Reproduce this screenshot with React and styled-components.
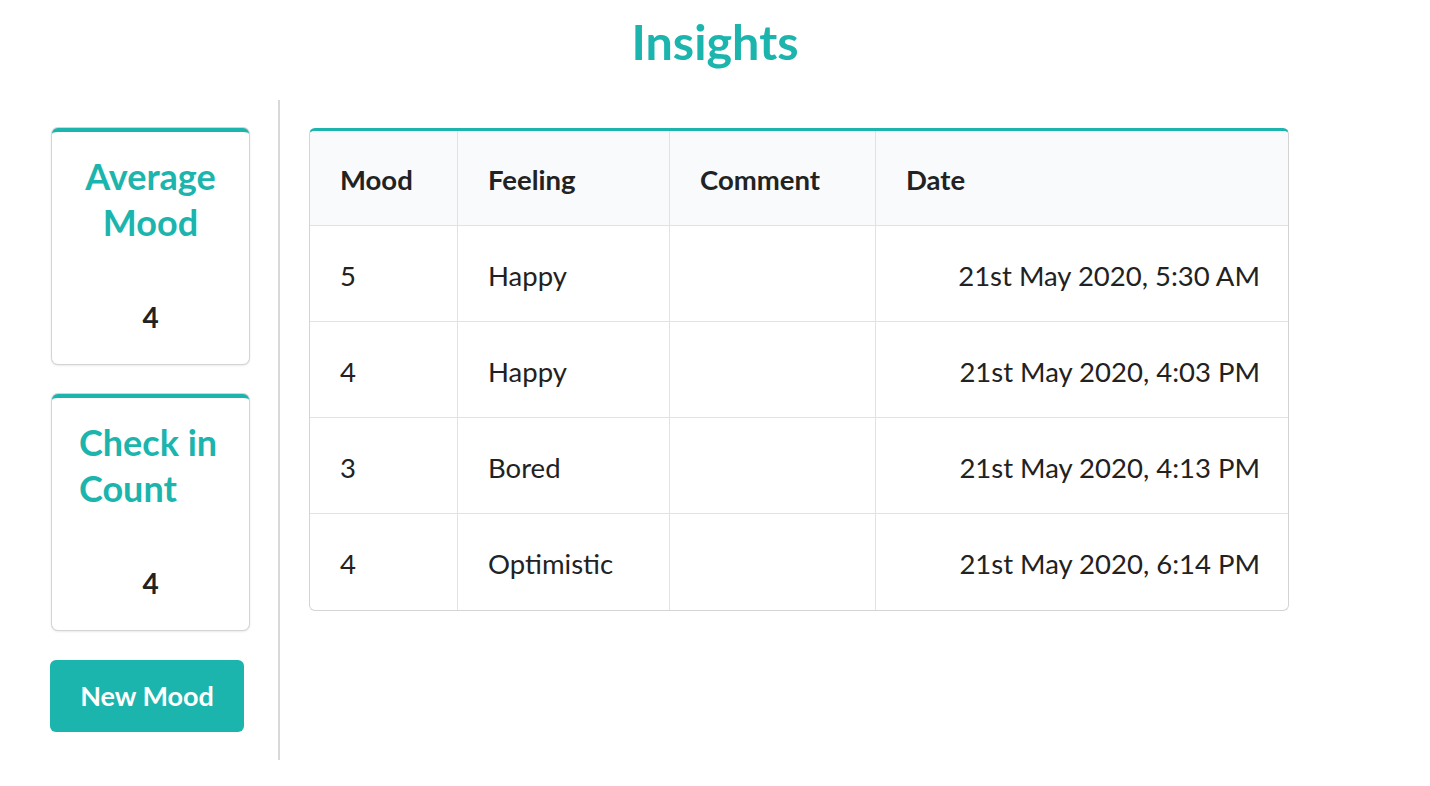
import React from 'react'
import styled, { createGlobalStyle } from 'styled-components'

const teal = '#1bb5ad'

const GlobalStyle = createGlobalStyle`
    html, body {
        margin: 0;
        padding: 0;
        background: #ffffff;
        font-family: Lato, "Open Sans", "Liberation Sans", sans-serif;
        color: rgba(0, 0, 0, 0.87);
    }
`

const Page = styled.div`
    width: 1430px;
    min-height: 786px;
`

const Title = styled.h1`
    margin: 0;
    padding-top: 12px;
    font-size: 48.5px;
    line-height: 58px;
    font-weight: 700;
    color: ${teal};
    text-align: center;
`

const Body = styled.div`
    display: flex;
    align-items: stretch;
    margin-top: 30px;
    padding-left: 50px;
`

const Sidebar = styled.div`
    width: 200px;
    display: flex;
    flex-direction: column;
    gap: 30px;
    padding: 28px 0;
`

const Divider = styled.div`
    width: 2px;
    background: #d8d8d9;
    margin: 0 29px 0 28px;
    min-height: 660px;
`

const Main = styled.div`
    padding-top: 28px;
`

const Card = styled.div`
    margin-left: 2px;
    width: 197px;
    background: #fff;
    border-top: 4px solid ${teal};
    border-radius: 6px;
    box-shadow: 0 1px 3px 0 #d4d4d5, 0 0 0 1px #d4d4d5;
    padding: 21px 0 30px;
`

const CardTitle = styled.div`
    font-size: 36px;
    line-height: 46px;
    font-weight: 700;
    color: ${teal};
    text-align: ${p => p.align || 'center'};
    padding: ${p => (p.align === 'left' ? '0 16px 0 27px' : '0 14px')};
`

const CardValue = styled.div`
    margin-top: 55px;
    font-size: 28px;
    line-height: 34px;
    font-weight: 700;
    text-align: center;
    color: #222;
`

const Button = styled.button`
    width: 194px;
    height: 72px;
    border: none;
    border-radius: 6px;
    background: ${teal};
    color: #fff;
    font-family: inherit;
    font-size: 27px;
    font-weight: 700;
    cursor: pointer;
    padding: 0 0 2px;
`

const Table = styled.table`
    width: 980px;
    table-layout: fixed;
    border-collapse: separate;
    border-spacing: 0;
    border: 1px solid #d4d4d5;
    border-top: 3px solid ${teal};
    border-radius: 6px;
    font-size: 27.5px;
    color: #222;

    th, td {
        height: 96px;
        padding: 3px 30px 0;
        border-bottom: 1px solid #e2e2e3;
        border-left: 1px solid #e2e2e3;
        vertical-align: middle;
        box-sizing: border-box;
    }

    th:first-child, td:first-child {
        border-left: none;
    }

    tbody tr:last-child td {
        border-bottom: none;
    }

    th {
        height: 95px;
        padding-top: 2px;
        background: #f9fafb;
        font-weight: 700;
        text-align: left;
    }

    td {
        font-weight: 400;
    }

    thead tr:first-child th:first-child {
        border-top-left-radius: 4px;
    }

    thead tr:first-child th:last-child {
        border-top-right-radius: 4px;
    }
`

const DateCell = styled.td`
    && {
        text-align: right;
        padding-right: 28px;
    }
`

const rows = [
    { mood: 5, feeling: 'Happy', comment: '', date: '21st May 2020, 5:30 AM' },
    { mood: 4, feeling: 'Happy', comment: '', date: '21st May 2020, 4:03 PM' },
    { mood: 3, feeling: 'Bored', comment: '', date: '21st May 2020, 4:13 PM' },
    { mood: 4, feeling: 'Optimistic', comment: '', date: '21st May 2020, 6:14 PM' }
]

const App = () => {
    return (
        <Page>
            <GlobalStyle />
            <Title>Insights</Title>
            <Body>
                <Sidebar>
                    <Card>
                        <CardTitle>Average Mood</CardTitle>
                        <CardValue>4</CardValue>
                    </Card>
                    <Card>
                        <CardTitle align="left">Check in Count</CardTitle>
                        <CardValue>4</CardValue>
                    </Card>
                    <Button>New Mood</Button>
                </Sidebar>
                <Divider />
                <Main>
                    <Table>
                        <colgroup>
                            <col style={{ width: 147 }} />
                            <col style={{ width: 212 }} />
                            <col style={{ width: 206 }} />
                            <col />
                        </colgroup>
                        <thead>
                            <tr>
                                <th>Mood</th>
                                <th>Feeling</th>
                                <th>Comment</th>
                                <th>Date</th>
                            </tr>
                        </thead>
                        <tbody>
                            {rows.map((row, i) => (
                                <tr key={i}>
                                    <td>{row.mood}</td>
                                    <td>{row.feeling}</td>
                                    <td>{row.comment}</td>
                                    <DateCell>{row.date}</DateCell>
                                </tr>
                            ))}
                        </tbody>
                    </Table>
                </Main>
            </Body>
        </Page>
    )
}

export default App
